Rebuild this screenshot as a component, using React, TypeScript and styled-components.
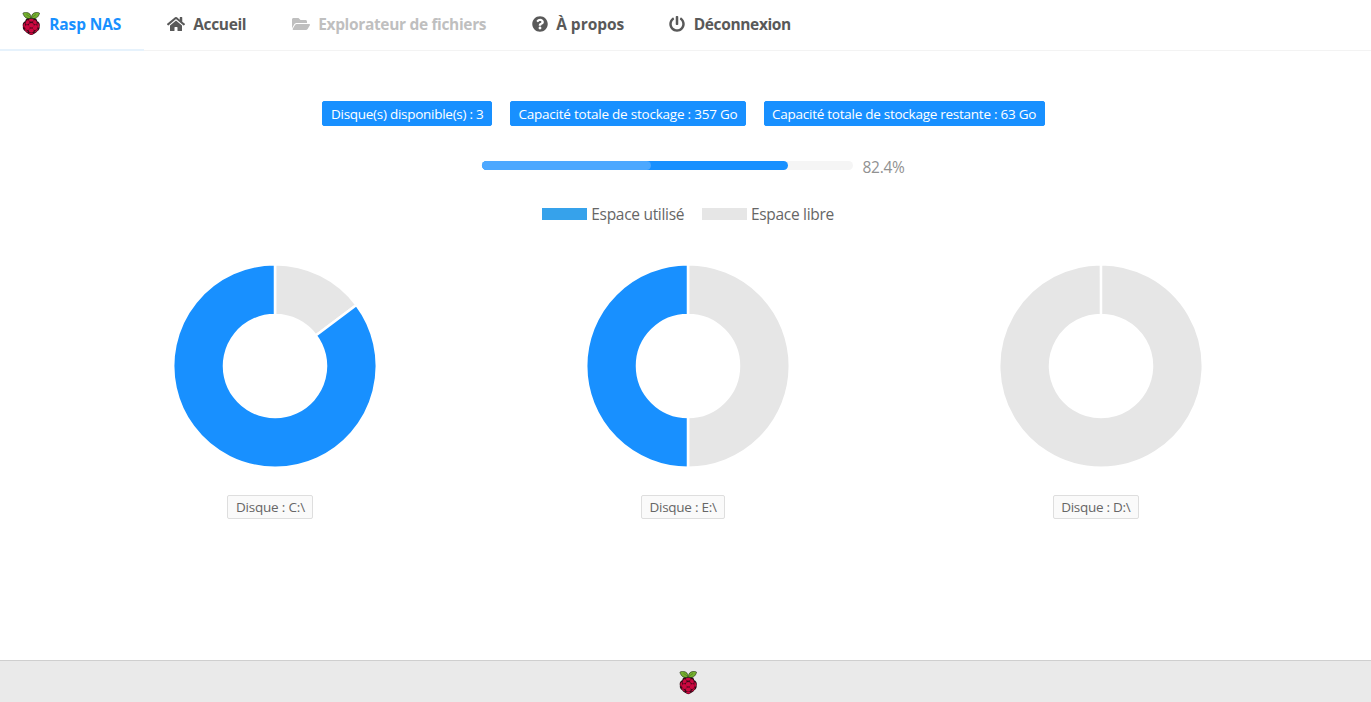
import React from "react";
import styled, { createGlobalStyle } from "styled-components";
import { FaHome, FaFolderOpen, FaQuestionCircle, FaPowerOff } from "react-icons/fa";

const GlobalStyle = createGlobalStyle`
  *, *::before, *::after { box-sizing: border-box; }
  body {
    margin: 0;
    background: #fff;
    color: #595959;
    font-family: "Segoe UI", "Open Sans", "Noto Sans", sans-serif;
  }
`;

const Page = styled.div`
  height: 702px;
  display: flex;
  flex-direction: column;
  overflow: hidden;
`;

const Nav = styled.nav`
  flex: none;
  display: flex;
  height: 51px;
  border-bottom: 1px solid #f3f3f3;
`;

const NavItem = styled.a<{ $state?: "active" | "disabled"; $width: number }>`
  flex: none;
  display: flex;
  align-items: center;
  width: ${(p) => p.$width}px;
  height: 51px;
  padding-left: ${(p) => (p.$state === "active" ? 22 : 22.5)}px;
  padding-bottom: ${(p) => (p.$state === "active" ? 2 : 4)}px;
  border-bottom: ${(p) => (p.$state === "active" ? "2px solid #e6f2fc" : "0")};
  color: ${(p) =>
    p.$state === "active" ? "#1890ff" : p.$state === "disabled" ? "#bfbfbf" : "#595959"};
  white-space: nowrap;

  > svg {
    flex: none;
    margin-right: 8.7px;
  }
`;

const NavText = styled.span<{ $tracking: number }>`
  font-size: 15.5px;
  font-weight: 700;
  line-height: 22px;
  letter-spacing: ${(p) => p.$tracking}px;
`;

const Content = styled.main`
  flex: 1;
  display: flex;
  flex-direction: column;
  align-items: center;
  padding-top: 50px;
`;

const TagRow = styled.div`
  display: flex;
  gap: 17.7px;
  margin-right: 4.2px;
`;

const Tag = styled.span<{ $width: number; $tracking: number; $primary?: boolean }>`
  display: flex;
  align-items: center;
  justify-content: center;
  width: ${(p) => p.$width}px;
  height: ${(p) => (p.$primary ? 25 : 24)}px;
  border: 1px solid ${(p) => (p.$primary ? "#1890ff" : "#dedede")};
  border-radius: 2px;
  background: ${(p) => (p.$primary ? "#1890ff" : "#fafafa")};
  color: ${(p) => (p.$primary ? "#fff" : "#666")};
  font-size: 13.5px;
  line-height: 22px;
  letter-spacing: ${(p) => p.$tracking}px;
  white-space: nowrap;
`;

const ProgressRow = styled.div`
  display: flex;
  align-items: center;
  gap: 9.5px;
  width: 424px;
  height: 24px;
  margin: 28px 0 0 16px;
`;

const Track = styled.div`
  flex: none;
  width: 371.5px;
  height: 9.4px;
  margin-top: -0.6px;
  border-radius: 5px;
  background: #f5f5f5;
`;

const Fill = styled.div`
  height: 100%;
  border-radius: 5px;
  background: #1890ff;
`;

const Shine = styled.div`
  width: 55.3%;
  height: 100%;
  border-radius: 5px;
  background: #4da8ff;
`;

const Percent = styled.span`
  padding-top: 2px;
  color: #919191;
  font-size: 15.5px;
  line-height: 24px;
  letter-spacing: -0.3px;
`;

const Legend = styled.div`
  display: flex;
  gap: 17.5px;
  height: 24px;
  margin: 24px 0 0 5px;
`;

const LegendItem = styled.div`
  display: flex;
  align-items: center;
  gap: 4.2px;
  color: #666;
  font-size: 15.5px;
  line-height: 24px;
  letter-spacing: -0.3px;
`;

const Swatch = styled.span<{ $color: string }>`
  width: 45px;
  height: 11.5px;
  background: ${(p) => p.$color};
`;

const Charts = styled.section`
  display: grid;
  grid-template-columns: repeat(3, 412.7px);
  margin: 37px 0 0 5.2px;
`;

const Disk = styled.div`
  display: flex;
  flex-direction: column;
  align-items: center;
`;

const Donut = styled.svg`
  display: block;
  width: 206px;
  height: 206px;
`;

const DiskLabel = styled.div`
  margin: 26.3px 10px 0 0;
`;

const Footer = styled.footer`
  flex: none;
  display: flex;
  justify-content: center;
  height: 42px;
  padding: 10px 0 0 5px;
  border-top: 1.5px solid #cfcfcf;
  background: #eaeaea;
`;

function Raspberry({ width = 18.5, height = 23.5 }) {
  return (
    <svg width={width} height={height} viewBox="0 0 37 47" aria-hidden="true">
      <path
        d="M18.5 12.5C24 10 30 12.5 30.5 18.5C34.5 20 36.5 24 35.2 28.5C36 33 34 36.5 31 38C28.5 42.5 23.5 44 18.5 46.5C13.5 44 8.5 42.5 6 38C3 36.5 1 33 1.8 28.5C.5 24 2.5 20 6.5 18.5C7 12.5 13 10 18.5 12.5Z"
        fill="#2a0a14"
      />
      <g stroke="#1d2c10" strokeWidth="1.2" strokeLinejoin="round" fill="#75b02e">
        <path d="M18 12.5C10 14.500 4.500 11.500 1.800 2.500C3.500 .8 6.500 .6 9 1.100C14.500 1.300 18.500 5 18 12.500Z" />
        <path d="M19 12.500C27 14.500 32.500 11.500 35.200 2.500C33.500 .8 30.500 .6 28 1.100C22.500 1.300 18.500 5 19 12.500Z" />
      </g>
      <g fill="none" stroke="#33541a" strokeWidth=".8">
        <path d="M9 5Q14 7 17.500 12" />
        <path d="M28 5Q23 7 19.500 12" />
      </g>
      <g fill="#cc0840" stroke="#cc0840" strokeWidth=".7">
        <path d="M18.500 14.200C21.500 14.200 23.700 15.200 23.700 16.500C22.500 18 20.500 19 18.500 19C16.500 19 14.500 18 13.300 16.500C13.300 15.200 15.500 14.200 18.500 14.200Z" />
        <path d="M11.500 16.200C14 18 15.500 19.500 14.700 21.500C13.500 23.800 10 25.500 7.800 24.600C6.600 21.500 8.200 17.200 11.500 16.200Z" />
        <path d="M25.500 16.200C23 18 21.500 19.500 22.300 21.500C23.500 23.800 27 25.500 29.200 24.600C30.400 21.500 28.800 17.200 25.500 16.200Z" />
        <ellipse cx="18.500" cy="26.500" rx="5" ry="4.700" />
        <path d="M5.500 22.200C6.500 25.500 6.500 29 4.200 31.500C2 28.500 2.500 24 5.500 22.200Z" />
        <path d="M31.500 22.200C30.500 25.500 30.500 29 32.800 31.500C35 28.500 34.500 24 31.500 22.200Z" />
        <ellipse cx="10.700" cy="31" rx="4.300" ry="5.200" transform="rotate(-28 10.700 31)" />
        <ellipse cx="26.300" cy="31" rx="4.300" ry="5.200" transform="rotate(28 26.300 31)" />
        <path d="M5.500 33.500C8 36 10.500 37.500 12.300 40.500C9 40.500 5.800 37.500 5.500 33.500Z" />
        <path d="M31.500 33.500C29 36 26.500 37.500 24.700 40.500C28 40.500 31.200 37.500 31.500 33.500Z" />
        <ellipse cx="18.500" cy="37" rx="4.800" ry="4" />
        <path d="M14 42.300C16.500 41.600 20.500 41.600 23 42.300C22 43.800 20 44.800 18.500 45C17 44.800 15 43.800 14 42.300Z" />
      </g>
    </svg>
  );
}

const CENTER = 103;
const OUTER = 101.8;
const INNER = 51;

function point(radius: number, share: number) {
  const angle = share * Math.PI * 2;
  return `${CENTER + radius * Math.sin(angle)} ${CENTER - radius * Math.cos(angle)}`;
}

function sector(from: number, to: number) {
  const large = to - from > 0.5 ? 1 : 0;
  return `M${point(OUTER, from)}A${OUTER} ${OUTER} 0 ${large} 1 ${point(OUTER, to)}L${point(
    INNER,
    to
  )}A${INNER} ${INNER} 0 ${large} 0 ${point(INNER, from)}Z`;
}

function UsageDonut({ free }: { free: number }) {
  return (
    <Donut viewBox="0 0 206 206" stroke="#fff" strokeWidth="2.5">
      <path d={sector(0, Math.min(free, 0.9999))} fill="#e6e6e6" />
      {free < 1 && <path d={sector(free, 1)} fill="#1890ff" />}
    </Donut>
  );
}

const totals = [
  { text: "Disque(s) disponible(s) : 3", width: 170, tracking: -0.27 },
  { text: "Capacité totale de stockage : 357 Go", width: 236, tracking: -0.225 },
  { text: "Capacité totale de stockage restante : 63 Go", width: 281, tracking: -0.26 },
];

const disks = [
  { name: "C:\\", free: 0.1475, width: 86, tracking: -0.19 },
  { name: "E:\\", free: 0.5, width: 84, tracking: -0.27 },
  { name: "D:\\", free: 1, width: 86, tracking: -0.28 },
];

export default function App() {
  const used = 82.4;
  return (
    <Page>
      <GlobalStyle />
      <Nav>
        <NavItem $state="active" $width={144}>
          <Raspberry />
          <NavText $tracking={-0.12}>Rasp NAS</NavText>
        </NavItem>
        <NavItem $width={125}>
          <FaHome size={18} />
          <NavText $tracking={-0.34}>Accueil</NavText>
        </NavItem>
        <NavItem $state="disabled" $width={240}>
          <FaFolderOpen size={18} />
          <NavText $tracking={-0.34}>Explorateur de fichiers</NavText>
        </NavItem>
        <NavItem $width={137.5}>
          <FaQuestionCircle size={16} />
          <NavText $tracking={-0.03}>À propos</NavText>
        </NavItem>
        <NavItem $width={145}>
          <FaPowerOff size={16} />
          <NavText $tracking={-0.36}>Déconnexion</NavText>
        </NavItem>
      </Nav>
      <Content>
        <TagRow>
          {totals.map((t) => (
            <Tag key={t.text} $primary $width={t.width} $tracking={t.tracking}>
              {t.text}
            </Tag>
          ))}
        </TagRow>
        <ProgressRow>
          <Track>
            <Fill style={{ width: `${used}%` }}>
              <Shine />
            </Fill>
          </Track>
          <Percent>{used}%</Percent>
        </ProgressRow>
        <Legend>
          <LegendItem>
            <Swatch $color="#36a2eb" />
            Espace utilisé
          </LegendItem>
          <LegendItem>
            <Swatch $color="#e6e6e6" />
            Espace libre
          </LegendItem>
        </Legend>
        <Charts>
          {disks.map((d) => (
            <Disk key={d.name}>
              <UsageDonut free={d.free} />
              <DiskLabel>
                <Tag $width={d.width} $tracking={d.tracking}>
                  Disque : {d.name}
                </Tag>
              </DiskLabel>
            </Disk>
          ))}
        </Charts>
      </Content>
      <Footer>
        <Raspberry />
      </Footer>
    </Page>
  );
}
